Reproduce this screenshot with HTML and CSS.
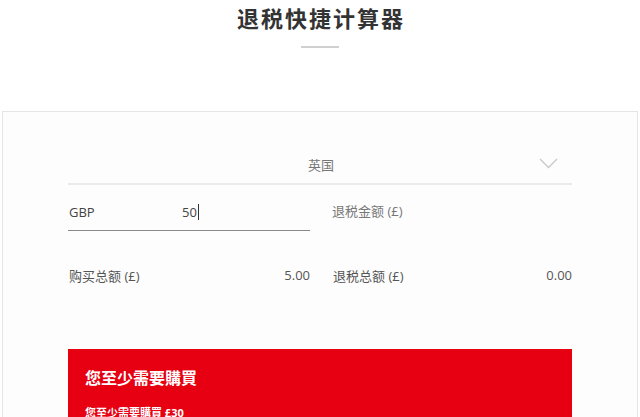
FILE: index.html
```html
<!DOCTYPE html>
<html lang="zh-CN">
<head>
  <meta charset="UTF-8">
  <title>退税快捷计算器</title>
  <meta name="viewport" content="width=device-width, initial-scale=1.0">
  <link rel="stylesheet" href="styles.css">
</head>
<body>
  <div class="heading">
    <h1>退税快捷计算器</h1>
    <div class="heading-line"></div>
  </div>

  <div class="calc-card">
    <div class="country-select">
      <span class="country-name">英国</span>
      <svg class="chevron" width="19" height="11" viewBox="0 0 19 11">
        <polyline points="1,1 9.5,9.5 18,1" fill="none" stroke="#c8c8c8" stroke-width="1.3"/>
      </svg>
    </div>

    <div class="calc-grid">
      <div class="amount-input">
        <span class="currency">GBP</span>
        <span class="input-value">50<span class="caret"></span></span>
      </div>
      <div class="field-label">退税金额 (£)</div>

      <div class="total-row">
        <span>购买总额 (£)</span>
        <span>5.00</span>
      </div>
      <div class="total-row">
        <span>退税总额 (£)</span>
        <span>0.00</span>
      </div>
    </div>

    <div class="notice">
      <h2>您至少需要購買</h2>
      <p>您至少需要購買 £30</p>
    </div>
  </div>
</body>
</html>
```

FILE: styles.css
```css
body {
  margin: 0;
  background: #ffffff;
  color: #555;
  font-family: "Open Sans", "Noto Sans CJK SC", sans-serif;
}

.heading {
  text-align: center;
  padding-top: 3px;
}

h1 {
  margin: 0;
  font-size: 22px;
  line-height: 30px;
  font-weight: bold;
  color: #333;
  letter-spacing: 2px;
  padding-left: 2px;
}

.heading-line {
  width: 38px;
  height: 2px;
  background: #d0d0d0;
  margin: 13px auto 0;
}

.calc-card {
  margin: 63px 2px 0;
  border: 1px solid #e6e6e6;
  background: #fdfdfd;
  padding: 33px 65px 0;
  height: 400px;
}

.country-select {
  position: relative;
  height: 38px;
  display: flex;
  align-items: center;
  justify-content: center;
  border-bottom: 2px solid #ebebeb;
}

.country-name {
  font-size: 13px;
  color: #777;
  margin-left: 2px;
}

.chevron {
  position: absolute;
  right: 14px;
  top: 13px;
}

.calc-grid {
  display: grid;
  grid-template-columns: 242px 1fr;
  column-gap: 22px;
}

.amount-input {
  display: flex;
  align-items: center;
  height: 36px;
  margin-top: 9px;
  border-bottom: 1px solid #888;
  font-size: 13px;
  color: #444;
}

.currency {
  width: 113px;
  padding-left: 1px;
}

.input-value {
  display: flex;
  align-items: center;
}

.caret {
  display: inline-block;
  width: 1px;
  height: 16px;
  background: #333;
  margin-left: 1px;
}

.field-label {
  display: flex;
  align-items: center;
  height: 36px;
  margin-top: 7px;
  font-size: 13px;
  color: #777;
}

.total-row {
  display: flex;
  justify-content: space-between;
  align-items: center;
  height: 20px;
  margin-top: 34px;
  font-size: 13px;
  color: #555;
  padding-left: 1px;
}

.notice {
  margin-top: 64px;
  background: #e60012;
  color: #fff;
  padding: 17px 17px 0;
  height: 120px;
}

.notice h2 {
  margin: 0;
  font-size: 16px;
  line-height: 24px;
  font-weight: bold;
}

.notice p {
  margin: 15px 0 0;
  font-size: 11px;
  font-weight: bold;
  line-height: 16px;
}
```
